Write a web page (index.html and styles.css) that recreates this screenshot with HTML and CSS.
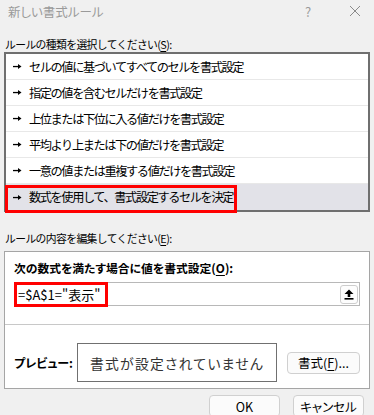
FILE: index.html
```html
<!DOCTYPE html>
<html lang="ja">
<head>
<meta charset="utf-8">
<link rel="stylesheet" href="styles.css">
</head>
<body>
<div class="dialog">
  <div class="titlebar">
    <span class="title">新しい書式ルール</span>
    <span class="tb-btns"><span class="help">?</span><svg class="close" width="12" height="12" viewBox="0 0 12 12"><path d="M1 1 L11 11 M11 1 L1 11" stroke="#8a8a8a" stroke-width="1"/></svg></span>
  </div>
  <div class="label label1">ルールの種類を選択してください(<u>S</u>):</div>
  <div class="list">
    <div class="row"><svg class="arr" width="9" height="7" viewBox="0 0 9 7"><rect x="0" y="2.9" width="6" height="1.3" fill="#000"/><polygon points="5,1 8.5,3.5 5,6" fill="#000"/></svg><span>セルの値に基づいてすべてのセルを書式設定</span></div>
    <div class="row"><svg class="arr" width="9" height="7" viewBox="0 0 9 7"><rect x="0" y="2.9" width="6" height="1.3" fill="#000"/><polygon points="5,1 8.5,3.5 5,6" fill="#000"/></svg><span>指定の値を含むセルだけを書式設定</span></div>
    <div class="row"><svg class="arr" width="9" height="7" viewBox="0 0 9 7"><rect x="0" y="2.9" width="6" height="1.3" fill="#000"/><polygon points="5,1 8.5,3.5 5,6" fill="#000"/></svg><span>上位または下位に入る値だけを書式設定</span></div>
    <div class="row"><svg class="arr" width="9" height="7" viewBox="0 0 9 7"><rect x="0" y="2.9" width="6" height="1.3" fill="#000"/><polygon points="5,1 8.5,3.5 5,6" fill="#000"/></svg><span>平均より上または下の値だけを書式設定</span></div>
    <div class="row"><svg class="arr" width="9" height="7" viewBox="0 0 9 7"><rect x="0" y="2.9" width="6" height="1.3" fill="#000"/><polygon points="5,1 8.5,3.5 5,6" fill="#000"/></svg><span>一意の値または重複する値だけを書式設定</span></div>
    <div class="row selected"><svg class="arr" width="9" height="7" viewBox="0 0 9 7"><rect x="0" y="2.9" width="6" height="1.3" fill="#000"/><polygon points="5,1 8.5,3.5 5,6" fill="#000"/></svg><span>数式を使用して、書式設定するセルを決定</span><i class="mark mark-row"></i></div>
  </div>
  <div class="label label2">ルールの内容を編集してください(<u>E</u>):</div>
  <div class="editbox">
    <div class="edit-top">
      <div class="bold-label">次の数式を満たす場合に値を書式設定(<u>O</u>):</div>
      <div class="formula">
        <span class="ftext">=$A$1="表示"</span>
        <span class="refbtn"><svg width="10" height="11" viewBox="0 0 10 11"><polygon points="5,0.5 9.5,5 6.3,5 6.3,8 3.7,8 3.7,5 0.5,5" fill="#000"/><rect x="0.5" y="9" width="9" height="1.6" fill="#000"/></svg></span>
        <i class="mark mark-formula"></i>
      </div>
    </div>
    <div class="sep"></div>
    <div class="preview-row">
      <span class="bold-label pv-label">プレビュー:</span>
      <div class="preview">書式が設定されていません</div>
      <button class="btn fmt">書式(<u>F</u>)...</button>
    </div>
  </div>
  <div class="footer">
    <button class="btn ok">OK</button>
    <button class="btn cancel">キャンセル</button>
  </div>
</div>
</body>
</html>
```

FILE: styles.css
```css
* { box-sizing: border-box; }
html, body { margin: 0; padding: 0; }
body {
  background: #f0f0f0;
  font-family: "Noto Sans CJK JP", "Noto Sans", sans-serif;
  font-feature-settings: "palt";
  color: #000;
  width: 374px;
  height: 415px;
  overflow: hidden;
}
u { text-decoration: underline; text-underline-offset: 2px; }
.dialog { display: flex; flex-direction: column; }
.titlebar {
  height: 22px;
  display: flex;
  align-items: center;
  justify-content: space-between;
  padding-left: 8px;
  color: #9a9a9a;
  font-size: 12.5px;
}
.tb-btns { display: flex; align-items: center; }
.help { width: 20px; text-align: center; margin-right: 31px; font-size: 13px; }
.close { margin-right: 13px; }
.label {
  font-size: 10.8px;
  letter-spacing: -0.6px;
  font-feature-settings: normal;
  line-height: 16px;
  padding-left: 5px;
  white-space: nowrap;
}
.label1 { margin-top: 14px; }
.list {
  margin: 0 4px;
  border: 2px solid #6f6f6f;
  background: #fff;
}
.row {
  position: relative;
  height: 26px;
  border-bottom: 1px solid #e8e8e8;
  display: flex;
  align-items: center;
  padding-left: 7px;
  font-size: 12.2px;
  letter-spacing: -1.4px;
  font-feature-settings: normal;
  white-space: nowrap;
}
.row .arr { margin-right: 7px; flex: none; }
.row.selected { background: #e2e2e8; border-bottom: none; }
.mark { position: absolute; border: 3px solid #ff0000; display: block; }
.mark-row { left: -1px; top: 1px; width: 232px; height: 28px; }
.label2 { margin-top: 18px; }
.editbox {
  margin: 5px 4px 0;
  border: 1px solid #a5a5a5;
  background: #fff;
}
.edit-top { padding: 8px 9px 0; }
.bold-label { font-weight: bold; font-size: 11.8px; line-height: 16px; white-space: nowrap; }
.formula {
  position: relative;
  margin-top: 6px;
  height: 24px;
  border: 1px solid #b8b8b8;
  display: flex;
  align-items: center;
  justify-content: space-between;
  padding: 0 1px 0 3px;
  font-size: 13px;
}
.refbtn {
  width: 18px;
  height: 19px;
  border: 1px solid #cdcdcd;
  border-radius: 3px;
  background: #fdfdfd;
  display: flex;
  align-items: center;
  justify-content: center;
}
.mark-formula { left: -1px; top: -1px; width: 94px; height: 25px; }
.sep { height: 1px; background: #c8c8c8; margin-top: 18px; }
.preview-row {
  display: flex;
  align-items: center;
  padding: 18px 9px 6px;
}
.pv-label { width: 63px; flex: none; font-size: 12px; }
.preview {
  width: 200px;
  height: 39px;
  flex: none;
  border: 1px solid #707070;
  display: flex;
  align-items: center;
  justify-content: center;
  font-size: 13.8px;
  letter-spacing: 1.3px;
  color: #333;
}
.btn {
  font-family: inherit;
  font-feature-settings: "palt";
  background: #fbfbfb;
  border: 1px solid #d0d0d0;
  border-radius: 4px;
  color: #000;
  font-size: 12.5px;
  padding: 0;
}
.fmt { margin-left: 10px; width: 73px; height: 22px; flex: none; }
.footer {
  display: flex;
  justify-content: flex-end;
  gap: 13px;
  padding: 6px 10px 0 0;
}
.ok, .cancel { width: 71px; height: 22px; }
```
